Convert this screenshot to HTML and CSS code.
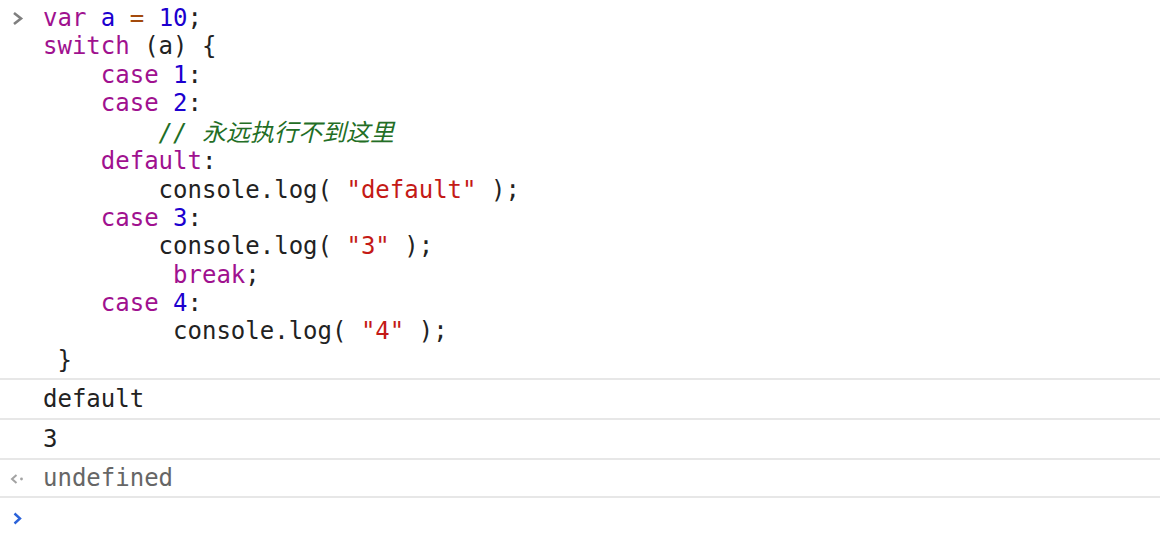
FILE: index.html
```html
<!DOCTYPE html>
<html lang="zh">
<head>
<meta charset="utf-8">
<title>Console</title>
<link rel="stylesheet" href="styles.css">
</head>
<body>
<div class="console">
  <div class="row echo">
    <div class="gutter"><svg class="icon prompt-gray" width="12" height="15" viewBox="0 0 12 15"><polyline points="2,2 9,7.5 2,13" fill="none" stroke="#7f7f7f" stroke-width="2.6"/></svg></div>
<pre class="code"><span class="kw">var</span> <span class="var">a</span> <span class="op">=</span> <span class="num">10</span>;
<span class="kw">switch</span> (a) {
    <span class="kw">case</span> <span class="num">1</span>:
    <span class="kw">case</span> <span class="num">2</span>:
        <span class="cm">// <span class="cjk">永远执行不到这里</span></span>
    <span class="kw">default</span>:
        console.log( <span class="str">"default"</span> );
    <span class="kw">case</span> <span class="num">3</span>:
        console.log( <span class="str">"3"</span> );
         <span class="kw">break</span>;
    <span class="kw">case</span> <span class="num">4</span>:
         console.log( <span class="str">"4"</span> );
 }</pre>
  </div>
  <div class="row log"><div class="gutter"></div><div class="msg">default</div></div>
  <div class="row log"><div class="gutter"></div><div class="msg">3</div></div>
  <div class="row result">
    <div class="gutter"><svg class="icon result-icon" width="16" height="12" viewBox="0 0 16 12"><polyline points="7.5,2 3,6 7.5,10" fill="none" stroke="#a3a3a3" stroke-width="2"/><circle cx="12.5" cy="6" r="1.4" fill="#a3a3a3"/></svg></div>
    <div class="msg muted">undefined</div>
  </div>
  <div class="row input">
    <div class="gutter"><svg class="icon prompt-blue" width="12" height="13" viewBox="0 0 12 13"><polyline points="2.5,1.5 8,6.5 2.5,11.5" fill="none" stroke="#2b62d9" stroke-width="2.4"/></svg></div>
    <div class="msg"></div>
  </div>
</div>
</body>
</html>
```

FILE: styles.css
```css
html, body {
  margin: 0;
  padding: 0;
  background: #ffffff;
}

.console {
  font-family: "DejaVu Sans Mono", "Noto Sans CJK SC", monospace;
  font-size: 24px;
  color: #222222;
  width: 1160px;
  height: 554px;
  overflow: hidden;
}

.row {
  display: flex;
  align-items: flex-start;
}

.row + .row {
  border-top: 2px solid #e7e7e7;
}

.gutter {
  width: 43px;
  flex: 0 0 43px;
  position: relative;
}

.icon {
  display: block;
}

.echo {
  padding-top: 4px;
  padding-bottom: 4px;
}

.prompt-gray {
  margin-top: 7px;
  margin-left: 12px;
}

.code {
  margin: 0;
  font: inherit;
  line-height: 28.3px;
  white-space: pre;
}

.kw { color: #a0118f; }
.var { color: #1c00cf; }
.num { color: #1c00cf; }
.op { color: #a34a0c; }
.str { color: #c41a16; }
.cm { color: #236e25; font-style: italic; }
.cjk {
  font-family: "Noto Sans CJK SC", sans-serif;
  letter-spacing: 0;
}

.log .msg {
  line-height: 38px;
  height: 38px;
}

.result .msg {
  line-height: 36px;
  height: 36px;
}

.muted {
  color: #666666;
}

.result-icon {
  margin-top: 13px;
  margin-left: 9px;
}

.input {
  height: 56px;
}

.prompt-blue {
  margin-top: 14px;
  margin-left: 12px;
}
```
